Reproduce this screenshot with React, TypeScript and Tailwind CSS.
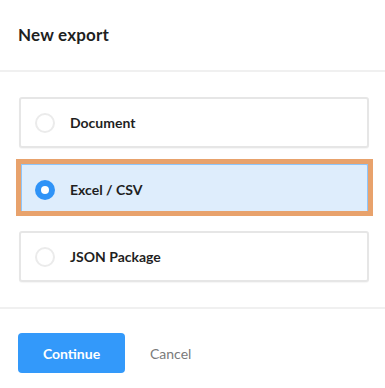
import { useState } from 'react';

const options = [
  { id: 'doc', label: 'Document' },
  { id: 'csv', label: 'Excel / CSV' },
  { id: 'json', label: 'JSON Package' },
];

function Radio({ checked }: { checked: boolean }) {
  if (checked) {
    return (
      <span className="flex h-5 w-5 shrink-0 items-center justify-center rounded-full bg-[#2f93f7]">
        <span className="h-2 w-2 rounded-full bg-white" />
      </span>
    );
  }
  return <span className="h-5 w-5 shrink-0 rounded-full border-2 border-[#ebebeb] bg-white" />;
}

export default function App() {
  const [selected, setSelected] = useState('csv');

  return (
    <div className="h-[388px] w-[385px] bg-white font-['Lato',sans-serif] text-[#1f1f1f]">
      {/* Header */}
      <div className="flex h-[70px] items-center px-[18px]">
        <h1 className="text-[17px] font-bold tracking-[0.2px]">New export</h1>
      </div>
      <div className="h-[2px] bg-[#f0f0f0]" />

      {/* Options */}
      <div className="flex flex-col gap-4 pb-[25px] pl-[19px] pt-[25px]">
        {options.map((opt) => {
          const active = selected === opt.id;
          return (
            <div
              key={opt.id}
              onClick={() => setSelected(opt.id)}
              className={
                active
                  ? 'relative flex h-[51px] w-[350px] cursor-pointer items-center gap-[15px] rounded-[3px] border border-[#8ec5fa] bg-[#deedfc] px-[15px]'
                  : 'relative flex h-[51px] w-[350px] cursor-pointer items-center gap-[15px] rounded-[3px] border-2 border-[#e6e6e6] bg-white px-[14px] shadow-[0_1px_1px_rgba(0,0,0,0.04)]'
              }
            >
              <Radio checked={active} />
              <span className="text-[14px] font-bold">{opt.label}</span>
              {active && (
                <div className="pointer-events-none absolute -bottom-[2px] -left-[4px] -right-[5px] -top-[6px] border-[5px] border-[#e8a26c]">
                  <div className="absolute inset-0 border-x border-t border-[#8ec5fa]" />
                </div>
              )}
            </div>
          );
        })}
      </div>
      <div className="h-[2px] bg-[#f0f0f0]" />

      {/* Footer */}
      <div className="flex items-center gap-[25px] px-[18px] pt-[24px]">
        <button className="h-10 w-[107px] rounded-[4px] bg-[#3399fa] text-[14px] font-bold text-white">
          Continue
        </button>
        <button className="text-[14px] text-[#7a7a7a]">Cancel</button>
      </div>
    </div>
  );
}
